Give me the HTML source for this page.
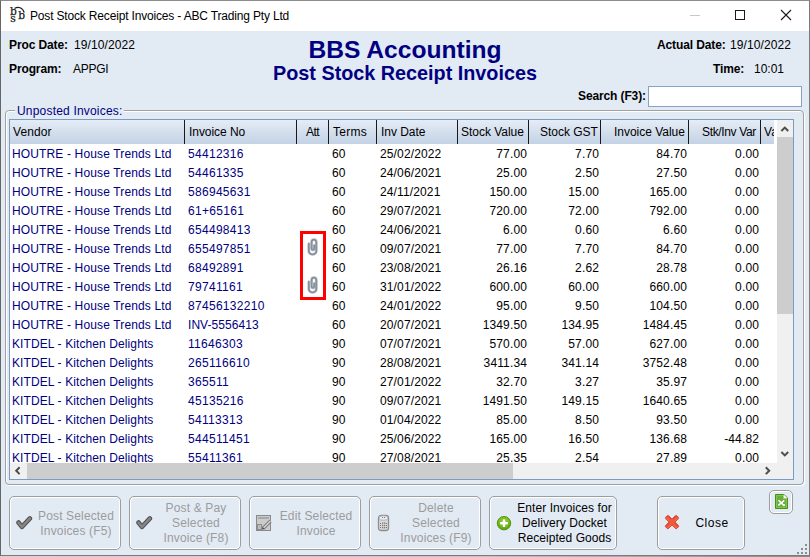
<!DOCTYPE html>
<html><head><meta charset="utf-8"><title>Post Stock Receipt Invoices - ABC Trading Pty Ltd</title>
<style>
*{box-sizing:border-box;margin:0;padding:0}
html,body{width:810px;height:557px;overflow:hidden;background:#fff}
body{font-family:"Liberation Sans",Arial,sans-serif;font-size:12px;color:#000;position:relative}
.abs{position:absolute}
#win{position:absolute;left:0;top:0;width:810px;height:556px;border:1px solid #7a7a7a;border-top-color:#8c8c8c;border-left-color:#666;background:#e2eaf4;overflow:hidden}
#tbar{position:absolute;left:0;top:0;width:808px;height:30px;background:#fff}
#ttl{position:absolute;left:29px;top:8px;font-size:12px;letter-spacing:-0.17px;white-space:nowrap;color:#000}
.lbl{position:absolute;white-space:nowrap;font-size:12px;letter-spacing:0}
.b{font-weight:bold;letter-spacing:-0.12px}
#h1{position:absolute;left:0;width:808px;top:35px;text-align:center;font-weight:bold;font-size:24.6px;color:#000080;white-space:nowrap}
#h2{position:absolute;left:0;width:808px;top:61px;text-align:center;font-weight:bold;font-size:19.8px;color:#000080;white-space:nowrap}
#search{position:absolute;left:647px;top:85px;width:154px;height:21px;background:#fff;border:1px solid #86a2c8}
#grp{position:absolute;left:4px;top:109px;width:799px;height:375px;border:1px solid #a0a0a0;border-radius:4px;box-shadow:inset 1px 1px 0 #fff, 1px 1px 0 #fff}
#grpl{position:absolute;left:14px;top:103px;padding:0 2px;background:#e2eaf4;color:#000080;font-size:12px;letter-spacing:0.19px;white-space:nowrap}
#grid{position:absolute;left:8px;top:118px;width:785px;height:361px;border:1px solid #7b9bc0;background:#fff;overflow:hidden}
#hdr{position:absolute;left:0;top:0;width:764px;height:24px;background:linear-gradient(#e5ecf6,#c3d2e5);}
.h{position:absolute;top:5px;white-space:nowrap;font-size:12px;letter-spacing:0.1px}
.sep{position:absolute;top:0;width:1px;height:24px;background:#1a1a1a}
#rows{position:absolute;left:0;top:24px;width:767px;height:319px;overflow:hidden}
.row{position:absolute;left:0;width:767px;height:19px}
.c{position:absolute;top:3px;white-space:nowrap;font-size:12px;letter-spacing:0.13px;line-height:14px}
.v{color:#000080}
.r{text-align:right}
.clip{display:block}
#vsb{position:absolute;left:767px;top:0;width:16px;height:343px;background:#f0f0f0}
#vth{position:absolute;left:0;top:17px;width:16px;height:177px;background:#cdcdcd}
#hsb{position:absolute;left:0;top:343px;width:767px;height:16px;background:#f0f0f0}
#hth{position:absolute;left:17px;top:0;width:486px;height:16px;background:#cdcdcd}
#cor{position:absolute;left:767px;top:343px;width:16px;height:16px;background:#f0f0f0}
.btn{position:absolute;top:495px;height:54px;border:1px solid #9d9d9d;border-radius:5px;box-shadow:inset 1px 1px 0 #fff,inset -1px -1px 0 #fff;background:#e2eaf4}
.bt{position:absolute;text-align:center;font-size:12px;line-height:15px;letter-spacing:0.15px;white-space:nowrap}
.dis{color:#9c9c9c}
</style></head><body>
<div id="win">
 <div id="tbar">
  <svg class="abs" style="left:8px;top:4px" width="18" height="20" viewBox="0 0 18 20" font-family="DejaVu Serif,Liberation Serif,serif" fill="#1a1a1a" stroke="#1a1a1a" stroke-width=".25">
   <text x="1.100" y="9.500" font-size="10.600">b</text>
   <text x="1.300" y="17" font-size="10.800">s</text>
   <text x="9.200" y="13.700" font-size="10.600">b</text>
   <path d="M5.500 3.500C9 1.300 13.700 2.400 15.200 7.600" fill="none" stroke-width="1.250"/>
  </svg>
  <div id="ttl">Post Stock Receipt Invoices - ABC Trading Pty Ltd</div>
  <svg class="abs" style="left:688px;top:8px" width="12" height="12"><path d="M1 6.500H11" stroke="#c8c8c8" stroke-width="1"/></svg>
  <svg class="abs" style="left:733px;top:8px" width="12" height="12"><rect x="1.500" y="1.500" width="9" height="9" fill="none" stroke="#1a1a1a" stroke-width="1"/></svg>
  <svg class="abs" style="left:779px;top:8px" width="12" height="12"><path d="M1 1L11 11M11 1L1 11" stroke="#1a1a1a" stroke-width="1.100"/></svg>
 </div>
 <div class="lbl b" style="left:8px;top:37px">Proc Date:</div>
 <div class="lbl" style="left:73px;top:37px;letter-spacing:.1px">19/10/2022</div>
 <div class="lbl b" style="left:8px;top:61px">Program:</div>
 <div class="lbl" style="left:72px;top:61px;letter-spacing:-.25px">APPGI</div>
 <div id="h1">BBS Accounting</div>
 <div id="h2">Post Stock Receipt Invoices</div>
 <div class="lbl b" style="left:656px;top:37px">Actual Date:</div>
 <div class="lbl" style="left:729px;top:37px;letter-spacing:.1px">19/10/2022</div>
 <div class="lbl b" style="left:712px;top:61px">Time:</div>
 <div class="lbl" style="left:753px;top:61px">10:01</div>
 <div class="lbl b" style="left:577px;top:88px">Search (F3):</div>
 <div id="search"></div>
 <div id="grp"></div>
 <div id="grpl">Unposted Invoices:</div>
 <div id="grid">
  <div id="hdr">
   <span class="h" style="left:3px">Vendor</span>
   <span class="h" style="left:179px;letter-spacing:-0.05px">Invoice No</span>
   <span class="h" style="left:296px;letter-spacing:-0.5px">Att</span>
   <span class="h" style="left:323px;letter-spacing:0.3px">Terms</span>
   <span class="h" style="left:371px;letter-spacing:-0.03px">Inv Date</span>
   <span class="h" style="left:451px;letter-spacing:-0.03px">Stock Value</span>
   <span class="h" style="left:530px;letter-spacing:-0.02px">Stock GST</span>
   <span class="h" style="left:604px;letter-spacing:-0.02px">Invoice Value</span>
   <span class="h" style="left:692px;letter-spacing:-0.35px">Stk/Inv Var</span>
   <span class="h" style="left:754px;width:10px;overflow:hidden">Va</span>
   <i class="sep" style="left:174px"></i>
   <i class="sep" style="left:286px"></i>
   <i class="sep" style="left:318px"></i>
   <i class="sep" style="left:366px"></i>
   <i class="sep" style="left:447px"></i>
   <i class="sep" style="left:518px"></i>
   <i class="sep" style="left:590px"></i>
   <i class="sep" style="left:678px"></i>
   <i class="sep" style="left:750px"></i>
  </div>
  <div id="rows">
<div class="row" style="top:0px"><span class="c v" style="left:2px;letter-spacing:.14px">HOUTRE - House Trends Ltd</span><span class="c v" style="left:178px;letter-spacing:.3px">54412316</span><span class="c" style="left:322px">60</span><span class="c" style="left:370px">25/02/2022</span><span class="c r" style="right:250px">77.00</span><span class="c r" style="right:178px">7.70</span><span class="c r" style="right:90px">84.70</span><span class="c r" style="right:18px">0.00</span></div>
<div class="row" style="top:19px"><span class="c v" style="left:2px;letter-spacing:.14px">HOUTRE - House Trends Ltd</span><span class="c v" style="left:178px;letter-spacing:.3px">54461335</span><span class="c" style="left:322px">60</span><span class="c" style="left:370px">24/06/2021</span><span class="c r" style="right:250px">25.00</span><span class="c r" style="right:178px">2.50</span><span class="c r" style="right:90px">27.50</span><span class="c r" style="right:18px">0.00</span></div>
<div class="row" style="top:38px"><span class="c v" style="left:2px;letter-spacing:.14px">HOUTRE - House Trends Ltd</span><span class="c v" style="left:178px;letter-spacing:.3px">586945631</span><span class="c" style="left:322px">60</span><span class="c" style="left:370px">24/11/2021</span><span class="c r" style="right:250px">150.00</span><span class="c r" style="right:178px">15.00</span><span class="c r" style="right:90px">165.00</span><span class="c r" style="right:18px">0.00</span></div>
<div class="row" style="top:57px"><span class="c v" style="left:2px;letter-spacing:.14px">HOUTRE - House Trends Ltd</span><span class="c v" style="left:178px;letter-spacing:.3px">61+65161</span><span class="c" style="left:322px">60</span><span class="c" style="left:370px">29/07/2021</span><span class="c r" style="right:250px">720.00</span><span class="c r" style="right:178px">72.00</span><span class="c r" style="right:90px">792.00</span><span class="c r" style="right:18px">0.00</span></div>
<div class="row" style="top:76px"><span class="c v" style="left:2px;letter-spacing:.14px">HOUTRE - House Trends Ltd</span><span class="c v" style="left:178px;letter-spacing:.3px">654498413</span><span class="c" style="left:322px">60</span><span class="c" style="left:370px">24/06/2021</span><span class="c r" style="right:250px">6.00</span><span class="c r" style="right:178px">0.60</span><span class="c r" style="right:90px">6.60</span><span class="c r" style="right:18px">0.00</span></div>
<div class="row" style="top:95px"><span class="c v" style="left:2px;letter-spacing:.14px">HOUTRE - House Trends Ltd</span><span class="c v" style="left:178px;letter-spacing:.3px">655497851</span><span class="c" style="left:297px;top:-1px"><svg class="clip" width="12" height="18" viewBox="0 0 12 18"><path d="M1.800 5.500V13A3.750 3.400 0 0 0 9.300 13V4.200A2.350 2.600 0 0 0 4.600 4.200V10.600A1.300 1.300 0 0 0 7.200 10.600V7.200" fill="none" stroke="#d3d7dc" stroke-width="3"/><path d="M1.800 5.500V13A3.750 3.400 0 0 0 9.300 13V4.200A2.350 2.600 0 0 0 4.600 4.200V10.600A1.300 1.300 0 0 0 7.200 10.600V7.200" fill="none" stroke="#87919d" stroke-width="1.900" stroke-linecap="round"/></svg></span><span class="c" style="left:322px">60</span><span class="c" style="left:370px">09/07/2021</span><span class="c r" style="right:250px">77.00</span><span class="c r" style="right:178px">7.70</span><span class="c r" style="right:90px">84.70</span><span class="c r" style="right:18px">0.00</span></div>
<div class="row" style="top:114px"><span class="c v" style="left:2px;letter-spacing:.14px">HOUTRE - House Trends Ltd</span><span class="c v" style="left:178px;letter-spacing:.3px">68492891</span><span class="c" style="left:322px">60</span><span class="c" style="left:370px">23/08/2021</span><span class="c r" style="right:250px">26.16</span><span class="c r" style="right:178px">2.62</span><span class="c r" style="right:90px">28.78</span><span class="c r" style="right:18px">0.00</span></div>
<div class="row" style="top:133px"><span class="c v" style="left:2px;letter-spacing:.14px">HOUTRE - House Trends Ltd</span><span class="c v" style="left:178px;letter-spacing:.3px">79741161</span><span class="c" style="left:297px;top:-1px"><svg class="clip" width="12" height="18" viewBox="0 0 12 18"><path d="M1.800 5.500V13A3.750 3.400 0 0 0 9.300 13V4.200A2.350 2.600 0 0 0 4.600 4.200V10.600A1.300 1.300 0 0 0 7.200 10.600V7.200" fill="none" stroke="#d3d7dc" stroke-width="3"/><path d="M1.800 5.500V13A3.750 3.400 0 0 0 9.300 13V4.200A2.350 2.600 0 0 0 4.600 4.200V10.600A1.300 1.300 0 0 0 7.200 10.600V7.200" fill="none" stroke="#87919d" stroke-width="1.900" stroke-linecap="round"/></svg></span><span class="c" style="left:322px">60</span><span class="c" style="left:370px">31/01/2022</span><span class="c r" style="right:250px">600.00</span><span class="c r" style="right:178px">60.00</span><span class="c r" style="right:90px">660.00</span><span class="c r" style="right:18px">0.00</span></div>
<div class="row" style="top:152px"><span class="c v" style="left:2px;letter-spacing:.14px">HOUTRE - House Trends Ltd</span><span class="c v" style="left:178px;letter-spacing:.3px">87456132210</span><span class="c" style="left:322px">60</span><span class="c" style="left:370px">24/01/2022</span><span class="c r" style="right:250px">95.00</span><span class="c r" style="right:178px">9.50</span><span class="c r" style="right:90px">104.50</span><span class="c r" style="right:18px">0.00</span></div>
<div class="row" style="top:171px"><span class="c v" style="left:2px;letter-spacing:.14px">HOUTRE - House Trends Ltd</span><span class="c v" style="left:178px;letter-spacing:.05px">INV-5556413</span><span class="c" style="left:322px">60</span><span class="c" style="left:370px">20/07/2021</span><span class="c r" style="right:250px">1349.50</span><span class="c r" style="right:178px">134.95</span><span class="c r" style="right:90px">1484.45</span><span class="c r" style="right:18px">0.00</span></div>
<div class="row" style="top:190px"><span class="c v" style="left:2px;letter-spacing:.1px">KITDEL - Kitchen Delights</span><span class="c v" style="left:178px;letter-spacing:.3px">11646303</span><span class="c" style="left:322px">90</span><span class="c" style="left:370px">07/07/2021</span><span class="c r" style="right:250px">570.00</span><span class="c r" style="right:178px">57.00</span><span class="c r" style="right:90px">627.00</span><span class="c r" style="right:18px">0.00</span></div>
<div class="row" style="top:209px"><span class="c v" style="left:2px;letter-spacing:.1px">KITDEL - Kitchen Delights</span><span class="c v" style="left:178px;letter-spacing:.3px">265116610</span><span class="c" style="left:322px">90</span><span class="c" style="left:370px">28/08/2021</span><span class="c r" style="right:250px">3411.34</span><span class="c r" style="right:178px">341.14</span><span class="c r" style="right:90px">3752.48</span><span class="c r" style="right:18px">0.00</span></div>
<div class="row" style="top:228px"><span class="c v" style="left:2px;letter-spacing:.1px">KITDEL - Kitchen Delights</span><span class="c v" style="left:178px;letter-spacing:.3px">365511</span><span class="c" style="left:322px">90</span><span class="c" style="left:370px">27/01/2022</span><span class="c r" style="right:250px">32.70</span><span class="c r" style="right:178px">3.27</span><span class="c r" style="right:90px">35.97</span><span class="c r" style="right:18px">0.00</span></div>
<div class="row" style="top:247px"><span class="c v" style="left:2px;letter-spacing:.1px">KITDEL - Kitchen Delights</span><span class="c v" style="left:178px;letter-spacing:.3px">45135216</span><span class="c" style="left:322px">90</span><span class="c" style="left:370px">09/07/2021</span><span class="c r" style="right:250px">1491.50</span><span class="c r" style="right:178px">149.15</span><span class="c r" style="right:90px">1640.65</span><span class="c r" style="right:18px">0.00</span></div>
<div class="row" style="top:266px"><span class="c v" style="left:2px;letter-spacing:.1px">KITDEL - Kitchen Delights</span><span class="c v" style="left:178px;letter-spacing:.3px">54113313</span><span class="c" style="left:322px">90</span><span class="c" style="left:370px">01/04/2022</span><span class="c r" style="right:250px">85.00</span><span class="c r" style="right:178px">8.50</span><span class="c r" style="right:90px">93.50</span><span class="c r" style="right:18px">0.00</span></div>
<div class="row" style="top:285px"><span class="c v" style="left:2px;letter-spacing:.1px">KITDEL - Kitchen Delights</span><span class="c v" style="left:178px;letter-spacing:.3px">544511451</span><span class="c" style="left:322px">90</span><span class="c" style="left:370px">25/06/2022</span><span class="c r" style="right:250px">165.00</span><span class="c r" style="right:178px">16.50</span><span class="c r" style="right:90px">136.68</span><span class="c r" style="right:18px">-44.82</span></div>
<div class="row" style="top:304px"><span class="c v" style="left:2px;letter-spacing:.1px">KITDEL - Kitchen Delights</span><span class="c v" style="left:178px;letter-spacing:.3px">55411361</span><span class="c" style="left:322px">90</span><span class="c" style="left:370px">27/08/2021</span><span class="c r" style="right:250px">25.35</span><span class="c r" style="right:178px">2.54</span><span class="c r" style="right:90px">27.89</span><span class="c r" style="right:18px">0.00</span></div>
   <div class="abs" style="left:290px;top:87px;width:26px;height:69px;border:3px solid #f00"></div>
  </div>
  <div id="vsb"><div id="vth"></div>
   <svg class="abs" style="left:0;top:0" width="16" height="17"><path d="M4.400 11L7.800 7.600L11.200 11" fill="none" stroke="#4d4d4d" stroke-width="2"/></svg>
   <svg class="abs" style="left:0;top:326px" width="16" height="17"><path d="M4.400 6L7.800 9.400L11.200 6" fill="none" stroke="#4d4d4d" stroke-width="2"/></svg>
  </div>
  <div id="hsb"><div id="hth"></div>
   <svg class="abs" style="left:0;top:0" width="17" height="16"><path d="M9.600 4.300L6.200 7.700L9.600 11.100" fill="none" stroke="#4d4d4d" stroke-width="2"/></svg>
   <svg class="abs" style="left:750px;top:0" width="17" height="16"><path d="M5.800 4.300L9.200 7.700L5.800 11.100" fill="none" stroke="#4d4d4d" stroke-width="2"/></svg>
  </div>
  <div id="cor"></div>
 </div>

 <div class="btn" style="left:8px;width:112px"><svg class="abs" style="left:6px;top:18px" width="18" height="16" viewBox="0 0 18 16" ><path d="M2.500 7.500L5.900 11.900L13.900 3.400" fill="none" stroke="#505050" stroke-width="4.500" stroke-linecap="round" stroke-linejoin="round"/><path d="M2.500 7.500L5.900 11.900L13.900 3.400" fill="none" stroke="#868686" stroke-width="2.500" stroke-linecap="round" stroke-linejoin="round"/></svg><div class="bt dis" style="left:21px;width:90px;top:12px">Post Selected<br>Invoices (F5)</div></div>
 <div class="btn" style="left:128px;width:112px"><svg class="abs" style="left:6px;top:18px" width="18" height="16" viewBox="0 0 18 16" ><path d="M2.500 7.500L5.900 11.900L13.900 3.400" fill="none" stroke="#505050" stroke-width="4.500" stroke-linecap="round" stroke-linejoin="round"/><path d="M2.500 7.500L5.900 11.900L13.900 3.400" fill="none" stroke="#868686" stroke-width="2.500" stroke-linecap="round" stroke-linejoin="round"/></svg><div class="bt dis" style="left:21px;width:90px;top:4px">Post &amp; Pay<br>Selected<br>Invoice (F8)</div></div>
 <div class="btn" style="left:248px;width:112px"><svg class="abs" style="left:5px;top:17px" width="18" height="18" viewBox="0 0 18 18"><rect x="1.500" y="1.500" width="14" height="15" fill="#cbcbcb" stroke="#8a8a8a"/><rect x="3" y="3" width="11" height="2" fill="#a8a8a8"/><rect x="2.500" y="10.500" width="4" height="5" fill="#bdbdbd" stroke="#8f8f8f"/><path d="M8 14.500L15.500 7" stroke="#777" stroke-width="3.400"/><path d="M8.500 14L15.500 7" stroke="#d8d8d8" stroke-width="1.400"/><path d="M6.800 15.800L9.300 14.800L7.700 13.300Z" fill="#444"/></svg><div class="bt dis" style="left:21px;width:90px;top:12px">Edit Selected<br>Invoice</div></div>
 <div class="btn" style="left:368px;width:112px"><svg class="abs" style="left:7px;top:17px" width="14" height="18" viewBox="0 0 14 18"><rect x="1.500" y="1.500" width="10" height="15" rx="2.500" fill="#dadada" stroke="#8e8e8e" stroke-width="1.300"/><ellipse cx="6.500" cy="4" rx="4.500" ry="2.200" fill="#ececec" stroke="#a5a5a5" stroke-width=".8"/><g fill="#777"><rect x="5" y="3" width="1" height="1"/><rect x="7" y="3" width="1" height="1"/><rect x="3" y="9" width="1" height="1"/><rect x="5" y="8.500" width="1.300" height="1.300"/><rect x="7" y="8.500" width="1.300" height="1.300"/><rect x="9" y="9" width="1" height="1"/><rect x="3" y="11" width="1" height="1"/><rect x="5" y="10.800" width="1.300" height="1.300"/><rect x="7" y="10.800" width="1.300" height="1.300"/><rect x="9" y="11" width="1" height="1"/><rect x="5" y="13" width="1.300" height="1.300"/><rect x="7" y="13" width="1.300" height="1.300"/><rect x="3" y="13" width="1" height="1"/><rect x="9" y="13" width="1" height="1"/></g></svg><div class="bt dis" style="left:21px;width:90px;top:4px">Delete<br>Selected<br>Invoices (F9)</div></div>
 <div class="btn" style="left:488px;width:128px"><svg class="abs" style="left:5px;top:18px" width="18" height="18" viewBox="0 0 18 18"><defs><radialGradient id="gp" cx="50%" cy="35%" r="65%"><stop offset="0" stop-color="#9ad13c"/><stop offset=".7" stop-color="#72b41c"/><stop offset="1" stop-color="#5a9c12"/></radialGradient></defs><circle cx="9" cy="8.200" r="6.700" fill="url(#gp)" stroke="#55950f" stroke-width="1"/><path d="M9 4.400V12M5.200 8.200H12.800" stroke="#fff" stroke-width="2.400"/></svg><div class="bt" style="left:22px;width:105px;top:4px;letter-spacing:.06px">Enter Invoices for<br>Delivery Docket<br>Receipted Goods</div></div>
 <div class="btn" style="left:656px;width:88px"><svg class="abs" style="left:6px;top:17px" width="18" height="18" viewBox="0 0 18 18"><defs><linearGradient id="gx" x1="0" y1="0" x2="0" y2="1"><stop offset="0" stop-color="#e5401f"/><stop offset=".45" stop-color="#ee5a42"/><stop offset="1" stop-color="#f0705c"/></linearGradient></defs><g transform="translate(8 8.100)" fill="url(#gx)" stroke="#da4228" stroke-width=".9"><rect x="-7.900" y="-2.100" width="15.800" height="4.200" rx="1.100" transform="rotate(45)"/><rect x="-7.900" y="-2.100" width="15.800" height="4.200" rx="1.100" transform="rotate(-45)"/></g><g transform="translate(8 8.100)" fill="#ed5941"><rect x="-3" y="-1.600" width="6" height="3.200" transform="rotate(45)"/><rect x="-3" y="-1.600" width="6" height="3.200" transform="rotate(-45)"/></g></svg><div class="bt" style="left:29px;width:50px;top:19px;letter-spacing:.5px">Close</div></div>
 <div class="btn" style="left:768px;width:24px;top:489px;height:24px"><svg class="abs" style="left:5px;top:3px" width="14" height="16" viewBox="0 0 14 16"><path d="M.5.500H9L12.500 4V14.500H.5Z" fill="#68ae38" stroke="#4a8e20"/><path d="M1.500 1.500H8.500V4.500H11.500V13.500H1.500Z" fill="none" stroke="#8cc95c" stroke-width=".8"/><path d="M8.700.6V4.300H12.400Z" fill="#fff"/><path d="M3.500 6.300L8.800 11.300L10 10.800M9.300 6.300L3.300 11.300" stroke="#fff" stroke-width="1.500" fill="none"/></svg></div>
 <svg class="abs" style="left:795px;top:542px" width="13" height="13" viewBox="0 0 13 13"><g fill="#8c8c8c"><rect x="9" y="1" width="2" height="2"/><rect x="5" y="5" width="2" height="2"/><rect x="9" y="5" width="2" height="2"/><rect x="1" y="9" width="2" height="2"/><rect x="5" y="9" width="2" height="2"/><rect x="9" y="9" width="2" height="2"/></g></svg>
</div>
<div style="position:absolute;left:0;top:556px;width:810px;height:1px;background:linear-gradient(90deg,#d6d6d6,#c4c4c4 60%,#8a8a8a)"></div>
</body></html>
